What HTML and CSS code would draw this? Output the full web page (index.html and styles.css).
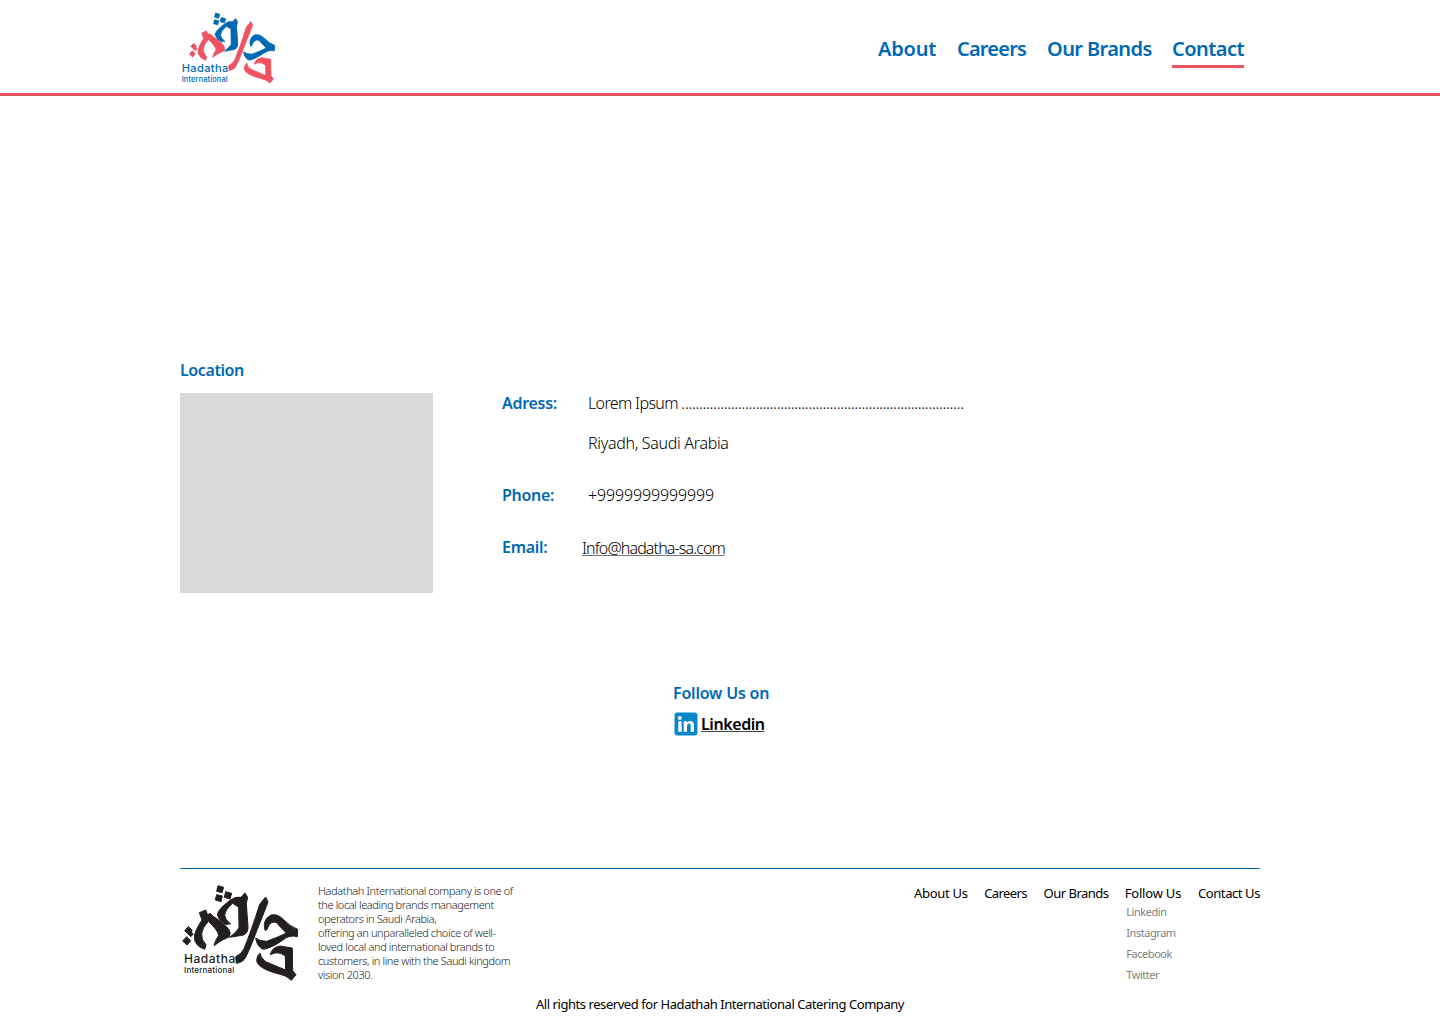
FILE: index.html
```
<!DOCTYPE html>
<html lang="en">
<head>
<meta charset="utf-8">
<title>Hadatha International - Contact</title>
<link rel="stylesheet" href="styles.css">
</head>
<body>
<svg class="defs" width="0" height="0" aria-hidden="true">
  <defs>
    <g id="dots-left">
      <path d="M40 140 52 151 42 164 29 152Z"/>
      <path d="M35 170 47 182 36 195 23 183Z"/>
      <path d="M48 156 55 162 47 170 41 163Z"/>
    </g>
    <path id="letter-left" d="M92 90 97 103 107 101 115 109Q144 127 161 147Q169 160 163 170Q137 181 117 197Q121 180 131 166Q128 150 100 124Q82 144 80 160Q78 180 93 194L89 208Q59 198 58 172Q59 152 81 120L73 98Z"/>
    <g id="dots-top">
      <path d="M129 17 146 22 141 38 125 34Z"/>
      <path d="M152 35 170 40 165 57 148 52Z"/>
      <path d="M125 44 142 48 138 65 121 60Z"/>
    </g>
    <path id="letter-middle" d="M210 39 218 52 214 70 219 142Q219 159 206 165L164 172Q183 158 192 144L191 82 173 70Q151 88 149 106Q151 120 167 132 158 131 154 134Q132 123 127 104Q129 88 165 61Q183 48 198 52Z"/>
    <path id="slash" d="M272 51 279 66Q265 104 246 150Q227 202 212 232Q203 248 184 250L182 230Q200 222 207 206Q230 150 254 73Z"/>
    <path id="letter-upper" d="M270 151Q261 119 288 105Q307 100 326 119Q344 139 368 148L367 170Q343 164 325 179Q291 204 265 208Q246 201 242 174Q255 184 275 184Q313 170 334 159Q318 144 305 128Q285 120 276 149Z"/>
    <path id="letter-lower" d="M286 224Q290 202 315 198L352 204 353 272 363 284 349 301Q334 286 315 283Q257 269 246 247Q243 230 255 220Q257 234 272 245Q305 259 332 270L331 228Q309 211 286 224Z"/>
  </defs>
</svg>

<header class="site-header">
  <div class="container header-row">
    <svg class="header-logo" viewBox="0 0 330 255" role="img" aria-label="Hadatha International">
      <g class="mark" transform="translate(26 11.6) scale(.742 .74)">
        <g class="red"><use href="#dots-left"/><use href="#letter-left"/><use href="#slash"/><use href="#letter-lower"/></g>
        <g class="blue"><use href="#dots-top"/><use href="#letter-middle"/><use href="#letter-upper"/></g>
      </g>
      <g class="blue logo-text">
        <text x="20" y="201" font-size="33" textLength="140">Hadatha</text>
        <text x="20" y="231" font-size="22" textLength="138">International</text>
      </g>
    </svg>
    <nav class="main-nav">
      <a class="nav-about" href="#">About</a>
      <a class="nav-careers" href="#">Careers</a>
      <a class="nav-brands" href="#">Our Brands</a>
      <a class="nav-contact active" href="#">Contact</a>
    </nav>
  </div>
</header>

<main class="container main">
  <section class="contact">
    <div class="location">
      <h2>Location</h2>
      <div class="map"></div>
    </div>
    <dl class="details">
      <dt>Adress:</dt>
      <dd><p class="street">Lorem Ipsum <span class="leader">................................................................................</span></p><p class="city">Riyadh, Saudi Arabia</p></dd>
      <dt>Phone:</dt>
      <dd class="phone">+9999999999999</dd>
      <dt>Email:</dt>
      <dd class="email"><a href="#">Info@hadatha-sa.com</a></dd>
    </dl>
  </section>
  <section class="follow">
    <h2>Follow Us on</h2>
    <a class="linkedin" href="#">
      <svg viewBox="0 0 24 24" aria-hidden="true">
        <rect x=".5" y=".5" width="23" height="23" rx="3" fill="#0a86ca"/>
        <circle cx="5.9" cy="6" r="1.9" fill="#fff"/>
        <path fill="#fff" d="M4.300 9.200h3.300v10.500H4.300zM9.700 9.200h3.100v1.500c.7-1.100 1.800-1.800 3.300-1.800 3 0 3.900 1.900 3.900 4.800v6h-3.300v-5.400c0-1.500-.2-2.700-1.700-2.700-1.600 0-2 1.200-2 2.700v5.400H9.700z"/>
      </svg>
      <span>Linkedin</span>
    </a>
  </section>
</main>

<footer class="container footer">
  <div class="footer-row">
    <svg class="footer-logo" viewBox="0 0 390 318" role="img" aria-label="Hadatha International">
      <g class="ink mark"><use href="#dots-left"/><use href="#letter-left"/><use href="#slash"/><use href="#letter-lower"/><use href="#dots-top"/><use href="#letter-middle"/><use href="#letter-upper"/></g>
      <g class="ink logo-text">
        <text x="27" y="250" font-size="36" textLength="154">Hadatha</text>
        <text x="27" y="279" font-size="24" textLength="151">International</text>
      </g>
    </svg>
    <p class="about">Hadathah International company is one of<br>the local leading brands management<br>operators in Saudi Arabia,<br>offering an unparalleled choice of well-<br>loved local and international brands to<br>customers, in line with the Saudi kingdom<br>vision 2030.</p>
    <nav class="footer-nav">
      <a class="f-about" href="#">About Us</a>
      <a class="f-careers" href="#">Careers</a>
      <a class="f-brands" href="#">Our Brands</a>
      <div class="social">
        <a class="f-follow" href="#">Follow Us</a>
        <ul><li>Linkedin</li><li>Instagram</li><li>Facebook</li><li>Twitter</li></ul>
      </div>
      <a class="f-contact" href="#">Contact Us</a>
    </nav>
  </div>
  <p class="copyright">All rights reserved for Hadathah International Catering Company</p>
</footer>
</body>
</html>
```
FILE: styles.css
```
* { box-sizing: border-box; margin: 0; padding: 0; }
body {
  font-family: "Noto Sans", sans-serif;
  font-size: 16px;
  line-height: 24px;
  color: #000;
  background: #fff;
}
a { color: inherit; text-decoration: none; white-space: nowrap; }
ul { list-style: none; }
.defs { display: block; height: 0; }
.container { width: 1080px; margin: 0 auto; }
.red { fill: #ef5261; stroke: #ef5261; }
.blue { fill: #0069b4; stroke: #0069b4; }
.ink { fill: #231f20; stroke: #231f20; }
.mark { stroke-width: 3; stroke-linejoin: round; }
.logo-text { font-family: Inter, sans-serif; font-weight: 500; stroke: none; }

.site-header { height: 96px; border-bottom: 3px solid #ef5261; }
.header-row { display: flex; justify-content: space-between; padding-right: 16px; }
.header-logo { width: 110px; height: 85px; margin: 5px 0 0 -5px; }
.main-nav {
  display: flex;
  gap: 21px;
  margin-top: 34px;
  height: 34px;
  font-size: 20px;
  line-height: 30px;
  font-weight: 600;
  color: #0069b4;
}
.nav-about { width: 58px; letter-spacing: -.2px; }
.nav-careers { width: 69px; letter-spacing: -.8px; }
.nav-brands { width: 104px; letter-spacing: -.6px; }
.nav-contact { width: 72px; letter-spacing: -.54px; }
.main-nav .active { border-bottom: 3px solid #ef5261; }

.main { padding-top: 262px; }
h2, dt { font-size: 16px; font-weight: 600; color: #0069b4; letter-spacing: -.4px; }
dt { letter-spacing: -.3px; }
.contact { display: flex; gap: 69px; }
.location { width: 253px; }
.map { height: 200px; margin-top: 11px; background: #d9d9d9; }
.details {
  display: grid;
  grid-template-columns: 86px 400px;
  grid-template-rows: 92px 52px 24px;
  margin-top: 33px;
}
dd { font-weight: 300; white-space: nowrap; }
.street { letter-spacing: -.64px; margin-bottom: 16px; }
.leader { letter-spacing: -.375px; }
.city { letter-spacing: -.31px; }
.phone { letter-spacing: -.13px; }
.email { margin-left: -6px; padding-top: 1px; letter-spacing: -.87px; }
.email a { text-decoration: underline; text-decoration-thickness: 1px; text-underline-offset: 1px; text-decoration-color: #777; text-decoration-skip-ink: none; }

.follow { width: 97px; margin: 88px 0 0 493px; }
.follow h2 { letter-spacing: -.2px; white-space: nowrap; }
.linkedin { display: flex; gap: 3px; margin: 7px 0 0 1px; font-weight: 600; letter-spacing: -.42px; }
.linkedin svg { width: 24px; height: 24px; flex: none; }
.linkedin span { text-decoration: underline; text-decoration-thickness: 1px; text-underline-offset: 1px; text-decoration-color: #444; }

.footer { margin-top: 132px; border-top: 1px solid #0069b4; }
.footer-row { display: flex; height: 123px; }
.footer-logo { width: 130px; height: 106px; margin: 11px 13px 0 -5px; }
.about {
  width: 220px;
  margin-top: 15px;
  font-size: 11px;
  line-height: 14px;
  font-weight: 300;
  color: #222;
  letter-spacing: -.385px;
  white-space: nowrap;
}
.footer-nav {
  display: flex;
  gap: 16.25px;
  margin: 14px 0 0 auto;
  font-size: 13px;
  line-height: 20px;
}
.f-about { width: 54px; letter-spacing: -.3px; }
.f-careers { width: 43px; letter-spacing: -.6px; }
.f-brands { width: 65px; letter-spacing: -.5px; }
.social { width: 57px; }
.f-follow { letter-spacing: -.2px; }
.f-contact { width: 62px; letter-spacing: -.42px; }
.social li { margin-left: 1.5px; font-size: 11px; line-height: 21px; color: #808080; letter-spacing: -.45px; }
.social ul { margin-top: -2px; }
.copyright { font-size: 13px; line-height: 24px; text-align: center; letter-spacing: -.44px; }
```
